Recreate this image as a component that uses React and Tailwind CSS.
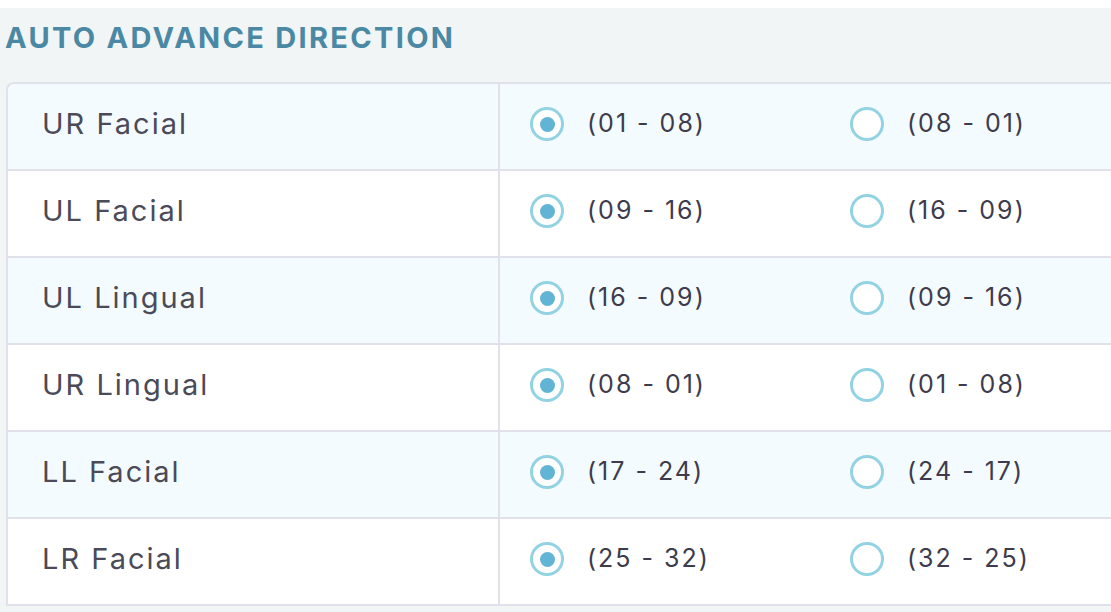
const rows = [
  { label: "UR Facial", a: "(01 - 08)", b: "(08 - 01)" },
  { label: "UL Facial", a: "(09 - 16)", b: "(16 - 09)" },
  { label: "UL Lingual", a: "(16 - 09)", b: "(09 - 16)" },
  { label: "UR Lingual", a: "(08 - 01)", b: "(01 - 08)" },
  { label: "LL Facial", a: "(17 - 24)", b: "(24 - 17)" },
  { label: "LR Facial", a: "(25 - 32)", b: "(32 - 25)" },
];

const Radio = ({ checked }) => (
  <span className="flex size-[34px] shrink-0 items-center justify-center rounded-full border-[3px] border-[#92d2e3] bg-white">
    {checked && <span className="size-[15px] rounded-full bg-[#62b4d4]" />}
  </span>
);

const Option = ({ checked, text }) => (
  <label className="flex w-[320px] shrink-0 items-center gap-[23px]">
    <Radio checked={checked} />
    <span className="text-[25px] tracking-[2px] text-[#3d3b4c]">{text}</span>
  </label>
);

export default function App() {
  return (
    <div className="h-[612px] w-full overflow-hidden border-t-8 border-white bg-[#f1f5f5] font-['Inter',sans-serif]">
      <h2 className="pl-[5px] pt-[14px] text-[29px] font-bold leading-[32px] tracking-[2.3px] text-[#4a88a3]">
        AUTO ADVANCE DIRECTION
      </h2>
      <div className="ml-[6px] mt-[28px] w-[1200px] overflow-hidden rounded-tl-lg border-2 border-b-0 border-[#e0e1eb]">
        {rows.map((row, i) => (
          <div
            key={row.label}
            className={`flex h-[87px] border-b-2 border-[#e0e1eb] ${i % 2 === 0 ? "bg-[#f4fbfe]" : "bg-white"}`}
          >
            <div className="flex w-[490px] shrink-0 items-center pb-[5px] pl-[34px] text-[29px] tracking-[2px] text-[#4b4a58]">
              {row.label}
            </div>
            <div className="flex flex-1 items-center border-l-2 border-[#e0e1eb] pb-[5px] pl-[30px]">
              <Option checked text={row.a} />
              <Option text={row.b} />
            </div>
          </div>
        ))}
      </div>
    </div>
  );
}
